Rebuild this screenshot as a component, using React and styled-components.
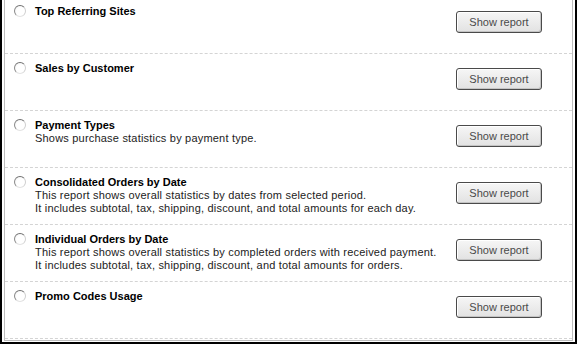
import React from "react";
import styled, { createGlobalStyle } from "styled-components";

const Global = createGlobalStyle`
  html, body { margin: 0; padding: 0; background: #fff; }
  body { overflow: hidden; font-family: "Liberation Sans", Arial, sans-serif; }
`;

const Frame = styled.div`
  width: 577px;
  height: 344px;
  box-sizing: border-box;
  border: 2px solid #000;
  border-top: none;
  padding: 0 2px 1px 2px;
  background: #fff;
  overflow: hidden;
`;

const Box = styled.div`
  height: 100%;
  box-sizing: border-box;
  border: 1px solid #bdbdbd;
  border-top: none;
  padding-bottom: 1px;
  overflow: hidden;
`;

const List = styled.div`
  margin-top: -3px;
  display: flex;
  flex-direction: column;
`;

const Row = styled.div`
  height: 57px;
  box-sizing: border-box;
  border-bottom: 1px dashed #d4d4d4;
  display: flex;
  align-items: flex-start;
  padding: 8px 30px 0 9px;
`;

const Radio = styled.span`
  flex: none;
  width: 12px;
  height: 12px;
  box-sizing: border-box;
  border-radius: 50%;
  border: 1px solid;
  border-color: #6f6f6f #cfcfcf #e2e2e2 #8a8a8a;
  background: radial-gradient(circle at 60% 60%, #fff 50%, #eee 100%);
  margin-right: 9px;
`;

const Info = styled.div`
  flex: 1;
  display: flex;
  flex-direction: column;
  font-size: 11px;
  line-height: 13px;
  color: #111;
`;

const Title = styled.div`
  font-weight: bold;
  color: #000;
`;

const Desc = styled.div`
  color: #222;
  letter-spacing: 0.2px;
`;

const Button = styled.button`
  flex: none;
  width: 86px;
  height: 22px;
  margin-top: 6px;
  border: 1px solid #4a4a4a;
  border-radius: 3px;
  background: linear-gradient(#f6f6f6, #e2e2e2);
  box-shadow: inset -1px -1px 0 #c4c4c4, inset 1px 1px 0 #fff;
  font-family: "Liberation Sans", Arial, sans-serif;
  font-size: 11px;
  color: #4a4a4a;
  padding: 0;
`;

const reports = [
  { title: "Top Referring Sites", lines: [] },
  { title: "Sales by Customer", lines: [] },
  { title: "Payment Types", lines: ["Shows purchase statistics by payment type."] },
  {
    title: "Consolidated Orders by Date",
    lines: [
      "This report shows overall statistics by dates from selected period.",
      "It includes subtotal, tax, shipping, discount, and total amounts for each day.",
    ],
  },
  {
    title: "Individual Orders by Date",
    lines: [
      "This report shows overall statistics by completed orders with received payment.",
      "It includes subtotal, tax, shipping, discount, and total amounts for orders.",
    ],
  },
  { title: "Promo Codes Usage", lines: [] },
];

export default function App() {
  return (
    <>
      <Global />
      <Frame>
        <Box>
          <List>
            {reports.map((r) => (
              <Row key={r.title}>
                <Radio />
                <Info>
                  <Title>{r.title}</Title>
                  {r.lines.map((l) => (
                    <Desc key={l}>{l}</Desc>
                  ))}
                </Info>
                <Button>Show report</Button>
              </Row>
            ))}
          </List>
        </Box>
      </Frame>
    </>
  );
}
